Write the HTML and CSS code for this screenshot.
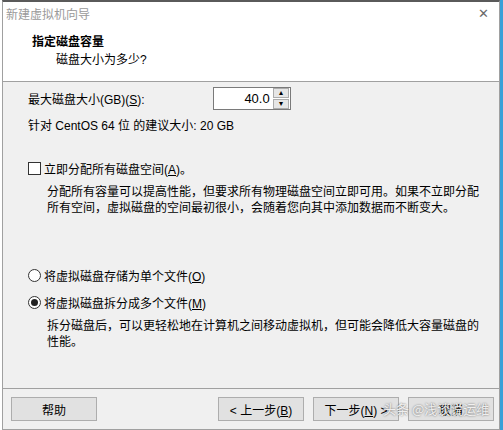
FILE: index.html
```html
<!DOCTYPE html>
<html lang="zh-CN">

<head>
    <meta charset="UTF-8">
    <meta name="viewport" content="width=device-width, initial-scale=1.0">
    <title>新建虚拟机向导</title>
    <link rel="stylesheet" href="styles.css">
</head>

<body>

    <div class="window">
        <!-- 标题和头部 -->
        <div class="header">
            <div class="titlebar">
                <span class="title">新建虚拟机向导</span>
                <span class="close">&#x2715;</span>
            </div>
            <h1>指定磁盘容量</h1>
            <p class="subtitle">磁盘大小为多少?</p>
        </div>

        <div class="content">
            <div class="size-row">
                <span>最大磁盘大小(GB)(<u>S</u>):</span>
                <div class="spin">
                    <span class="spin-value">40.0</span>
                    <div class="spin-buttons">
                        <span class="spin-btn">&#9652;</span>
                        <span class="spin-btn">&#9662;</span>
                    </div>
                </div>
            </div>
            <p class="hint">针对 CentOS 64 位 的建议大小: 20 GB</p>

            <label class="option check-option">
                <span class="checkbox"></span>
                <span>立即分配所有磁盘空间(<u>A</u>)。</span>
            </label>
            <p class="desc">分配所有容量可以提高性能，但要求所有物理磁盘空间立即可用。如果不立即分配所有空间，虚拟磁盘的空间最初很小，会随着您向其中添加数据而不断变大。</p>

            <label class="option radio-option first-radio">
                <span class="radio"></span>
                <span>将虚拟磁盘存储为单个文件(<u>O</u>)</span>
            </label>
            <label class="option radio-option">
                <span class="radio checked"></span>
                <span>将虚拟磁盘拆分成多个文件(<u>M</u>)</span>
            </label>
            <p class="desc">拆分磁盘后，可以更轻松地在计算机之间移动虚拟机，但可能会降低大容量磁盘的性能。</p>
        </div>

        <div class="footer">
            <button class="btn">帮助</button>
            <div class="nav-buttons">
                <button class="btn">&lt; 上一步(<u>B</u>)</button>
                <button class="btn">下一步(<u>N</u>) &gt;</button>
                <button class="btn cancel">取消</button>
            </div>
        </div>
    </div>

    <div class="watermark">头条 @浅谈说运维</div>
    <div class="edge"></div>

</body>

</html>
```

FILE: styles.css
```css
/* 向导窗口 */
body {
    margin: 0;
    padding: 0;
    width: 503px;
    height: 430px;
    overflow: hidden;
    background: #ffffff;
    font-family: 'Liberation Sans', 'Noto Sans CJK SC', sans-serif;
    font-size: 12px;
    color: #000000;
    position: relative;
}

.window {
    position: relative;
    margin-left: 2px;
    width: 496px;
    height: 427px;
    border-left: 1px solid #a0a0a0;
    border-right: 1px solid #a0a0a0;
    border-bottom: 1px solid #a0a0a0;
    border-top: 2px solid #5a5a5a;
    background: #f0f0f0;
    display: flex;
    flex-direction: column;
}

.header {
    background: #ffffff;
    height: 79px;
    border-bottom: 1px solid #a0a0a0;
}

.titlebar {
    display: flex;
    justify-content: space-between;
    align-items: center;
    height: 22px;
    padding: 0 10px 0 3px;
}

.title {
    color: #9a9a9a;
    font-size: 12px;
}

.close {
    color: #6a6a6a;
    font-size: 13px;
}

.header h1 {
    margin: 10px 0 0 29px;
    font-size: 12px;
    font-weight: bold;
    line-height: 16px;
}

.subtitle {
    margin: 2px 0 0 53px;
    line-height: 16px;
}

.content {
    flex: 1;
    padding: 5px 0 0 25px;
}

.size-row {
    display: flex;
    align-items: center;
    height: 22px;
}

.spin {
    margin-left: 68px;
    width: 76px;
    height: 21px;
    border: 1px solid #7a7a7a;
    background: #ffffff;
    display: flex;
    align-items: center;
}

.spin-value {
    flex: 1;
    text-align: right;
    padding-right: 3px;
    font-size: 13px;
}

.spin-buttons {
    display: flex;
    flex-direction: column;
    gap: 1px;
    margin-right: 1px;
}

.spin-btn {
    width: 14px;
    height: 8px;
    line-height: 8px;
    border: 1px solid #acacac;
    background: #e6e6e6;
    font-size: 8px;
    text-align: center;
    color: #000000;
}

.hint {
    margin: 9px 0 0 0;
    line-height: 16px;
}

.option {
    display: flex;
    align-items: center;
    gap: 3px;
    height: 16px;
}

.check-option {
    margin-top: 26px;
}

.checkbox {
    width: 11px;
    height: 11px;
    border: 1px solid #333333;
    background: #ffffff;
}

.desc {
    margin: 8px 20px 0 19px;
    line-height: 16px;
}

.first-radio {
    margin-top: 51px;
}

.radio-option + .radio-option {
    margin-top: 11px;
}

.radio {
    width: 11px;
    height: 11px;
    border: 1px solid #333333;
    border-radius: 50%;
    background: #ffffff;
    display: flex;
    align-items: center;
    justify-content: center;
}

.radio.checked::after {
    content: "";
    width: 7px;
    height: 7px;
    border-radius: 50%;
    background: #222222;
}

.footer {
    height: 40px;
    border-top: 1px solid #a0a0a0;
    display: flex;
    align-items: center;
    justify-content: space-between;
    padding: 0 5px 0 8px;
}

.nav-buttons {
    display: flex;
    gap: 9px;
}

.btn {
    width: 86px;
    height: 24px;
    border: 1px solid #adadad;
    background: #e1e1e1;
    font-family: 'Liberation Sans', 'Noto Sans CJK SC', sans-serif;
    font-size: 12px;
    color: #000000;
    padding: 0;
}

.watermark {
    position: absolute;
    left: 383px;
    top: 399px;
    font-family: 'Noto Sans CJK SC', sans-serif;
    font-size: 13px;
    color: rgba(255, 255, 255, 0.85);
    text-shadow: 0 0 2px rgba(0, 0, 0, 0.6);
}

.edge {
    position: absolute;
    right: 0;
    top: 0;
    width: 3px;
    height: 430px;
    background: #3aa0d8;
}
```
